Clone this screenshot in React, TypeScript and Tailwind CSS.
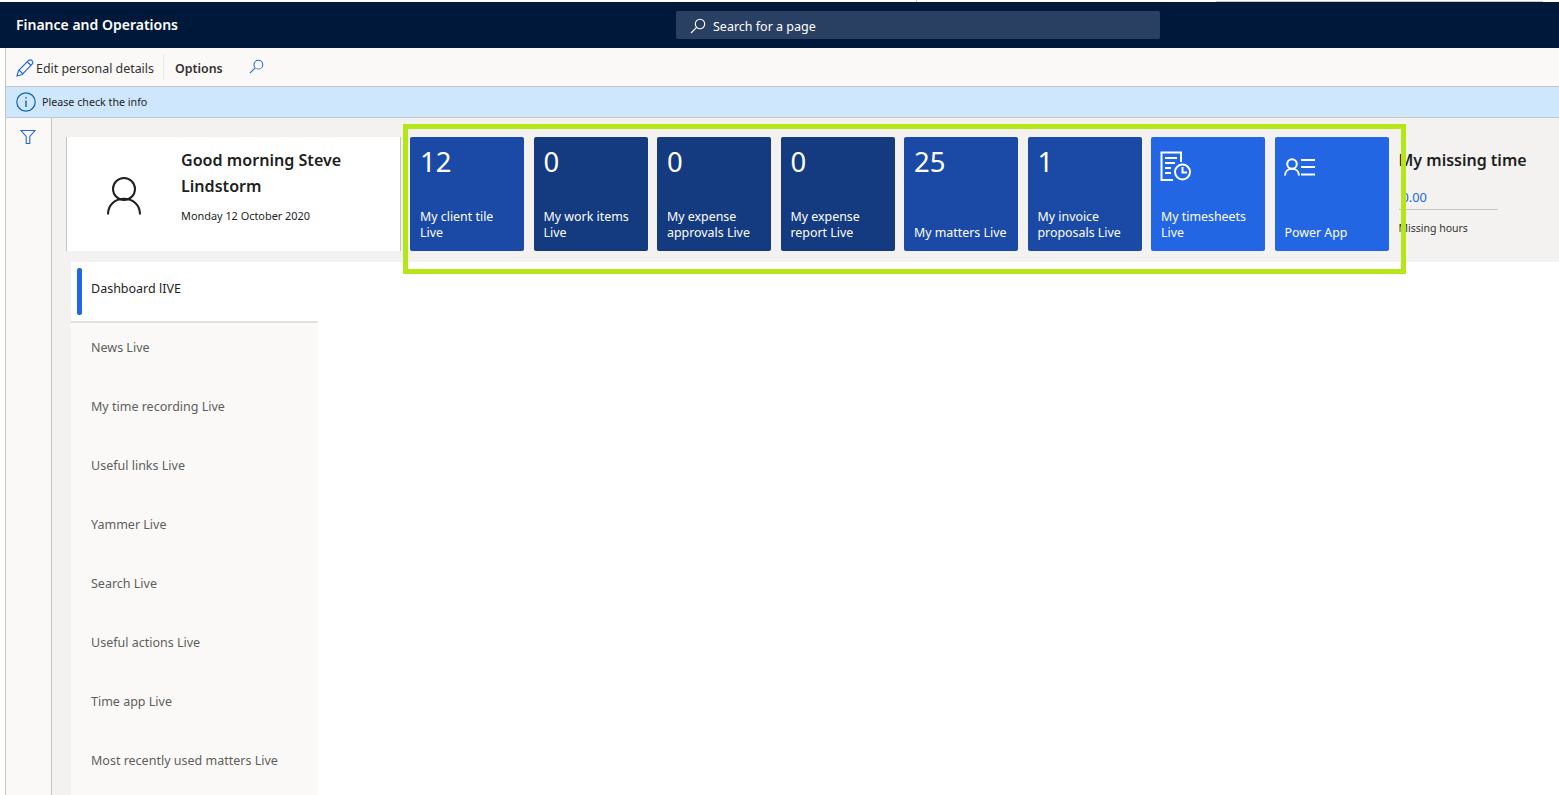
const tiles = [
  { count: "12", lines: ["My client tile", "Live"], color: "bg-[#1a4aa5]" },
  { count: "0", lines: ["My work items", "Live"], color: "bg-[#143a7f]" },
  { count: "0", lines: ["My expense", "approvals Live"], color: "bg-[#143a7f]" },
  { count: "0", lines: ["My expense", "report Live"], color: "bg-[#143a7f]" },
  { count: "25", lines: ["My matters Live"], color: "bg-[#1a4aa5]" },
  { count: "1", lines: ["My invoice", "proposals Live"], color: "bg-[#1a4aa5]" },
  { icon: "timesheet", lines: ["My timesheets", "Live"], color: "bg-[#2266e3]" },
  { icon: "person", lines: ["Power App"], color: "bg-[#2266e3]" },
];

const navItems = [
  "News Live",
  "My time recording Live",
  "Useful links Live",
  "Yammer Live",
  "Search Live",
  "Useful actions Live",
  "Time app Live",
  "Most recently used matters Live",
];

const SearchIcon = ({ className }: { className: string }) => (
  <svg viewBox="0 0 16 16" fill="none" stroke="currentColor" strokeWidth="1.1" className={className}>
    <circle cx="10" cy="6" r="4.7" />
    <path d="M6.6 9.4 1 15" />
  </svg>
);

const TimesheetIcon = () => (
  <svg viewBox="0 0 32 32" fill="none" stroke="white" strokeWidth="2" className="ml-[-1px] mt-[-1px] h-[32px] w-[32px]">
    <path d="M13 29H1.500V1.500H21V11" />
    <path d="M5 7H17M5 12H15M5 17H11M5 22H11" />
    <circle cx="22.500" cy="21" r="7.500" />
    <path d="M22.500 16V21.500H27" />
  </svg>
);

const PersonListIcon = () => (
  <svg viewBox="0 0 32 24" fill="none" stroke="white" strokeWidth="2" className="ml-[-1px] h-[24px] w-[32px]">
    <circle cx="8" cy="8" r="4.800" />
    <path d="M1 19.500C1 15.500 4 12.800 8 12.800C12 12.800 15 15.500 15 19.500" />
    <path d="M17 4H31M17 11H31M17 18.500H31" />
  </svg>
);

export default function App() {
  return (
    <div className="relative flex h-[795px] w-[1559px] flex-col overflow-hidden bg-white font-['Noto_Sans',sans-serif] text-[#201f1e]">
      {/* bit of the window behind, peeking out above the bar */}
      <div className="flex h-[2px]">
        <div className="ml-[916px] h-[2px] w-px bg-[#c8c8c8]" />
        <div className="ml-[299px] mt-px h-px w-[327px] bg-[#c8c8c8]" />
      </div>

      <header className="flex h-[46px] items-center bg-[#00183a]">
        <div className="mb-[2px] ml-4 w-[660px] text-[14px] font-semibold text-white">Finance and Operations</div>
        <div className="flex h-[28px] w-[484px] items-center rounded-[2px] bg-[#2a4063] pl-[14px] text-white">
          <SearchIcon className="mt-[2px] h-[16px] w-[16px]" />
          <span className="ml-[7px] pt-[4px] text-[12.500px]">Search for a page</span>
        </div>
      </header>

      <div className="ml-[5px] flex min-h-0 flex-1 flex-col border-l border-[#c4c4c4]">
        <div className="flex h-[39px] items-center border-b border-[#c8c6c4] bg-[#faf9f8] text-[12.400px]">
          <svg viewBox="0 0 18 18" fill="none" stroke="#2266e3" strokeWidth="1.1" className="ml-[10px] mt-px h-[18px] w-[18px]">
            <path d="M1 17 2.500 11.500 12.500 1.500C13.500 0.700 15 0.700 16 1.700C17 2.700 17 4 16.300 5L6.200 15.500 1 17Z" />
            <path d="M3 11 7 15M11.500 3 15 6.500" />
          </svg>
          <span className="ml-[2px] w-[127px] pt-[4px] text-[#323130]">Edit personal details</span>
          <div className="h-[26px] w-px bg-[#edebe9]" />
          <span className="ml-[11px] pt-[4px] font-semibold text-[#323130]">Options</span>
          <SearchIcon className="mb-[1px] ml-[26px] h-[15px] w-[15px] text-[#2266e3]" />
        </div>

        <div className="flex h-[31px] items-center border-b border-[#c8c6c4] bg-[#cfe7fd] text-[10.700px]">
          <svg viewBox="0 0 20 20" fill="none" stroke="#0f62b0" strokeWidth="1.2" className="ml-[10px] h-[20px] w-[20px]">
            <circle cx="10" cy="10" r="9.200" />
            <path d="M10 8.500V15M10 5V6.500" strokeWidth="1.400" />
          </svg>
          <span className="ml-[6px] text-[#201f1e]">Please check the info</span>
        </div>

        <div className="flex min-h-0 flex-1">
          <div className="w-[46px] shrink-0 border-r border-[#c4c4c4] bg-[#faf9f8] pl-[14px] pt-[11px]">
            <svg viewBox="0 0 16 16" fill="none" stroke="#2266e3" strokeWidth="1.100" className="h-[16px] w-[16px]">
              <path d="M1 1.500H15L9.800 7.500V14.500H6.200V7.500L1 1.500Z" />
            </svg>
          </div>

          <main className="flex min-w-0 flex-1 flex-col">
            <section className="flex h-[144px] items-start bg-[#f3f2f1] pl-[14px] pt-[19px]">
              <div className="flex h-[114px] w-[335px] border-x border-[#c8c6c4] bg-white">
                <div className="flex w-[114px] shrink-0 justify-center pt-[39px]">
                  <svg viewBox="0 0 36 40" fill="none" stroke="#201f1e" strokeWidth="2" className="h-[40px] w-[36px]">
                    <circle cx="18" cy="13" r="11" />
                    <path d="M2 38.500C2 29 9 22.800 18 22.800C27 22.800 34 29 34 38.500" />
                  </svg>
                </div>
                <div className="pt-[10px]">
                  <div className="text-[16.100px] font-semibold leading-[26px]">
                    Good morning Steve
                    <br />
                    Lindstorm
                  </div>
                  <div className="mt-[9px] text-[10.900px] leading-[15px]">Monday 12 October 2020</div>
                </div>
              </div>

              <div className="ml-[9px] flex gap-[9.500px]">
                {tiles.map((tile) => (
                  <div key={tile.lines[0]} className={`flex h-[114px] w-[114px] flex-col rounded-[2px] px-[10px] pb-[10px] text-white ${tile.color}`}>
                    <div className="h-[34px] pt-[6px] text-[27.500px] leading-[38px]">
                      {tile.count}
                      {tile.icon === "timesheet" && <div className="pt-[9px]"><TimesheetIcon /></div>}
                      {tile.icon === "person" && <div className="pt-[13px]"><PersonListIcon /></div>}
                    </div>
                    <div className="mt-auto text-[12.400px] leading-[16px]">
                      {tile.lines.map((line) => (
                        <div key={line}>{line}</div>
                      ))}
                    </div>
                  </div>
                ))}
              </div>

              <div className="ml-[10px] w-[99px] pt-[10px]">
                <div className="whitespace-nowrap text-[16px] font-semibold leading-[26px]">My missing time</div>
                <div className="mt-[15px] border-b border-[#c8c6c4] pb-[3px] pl-[3px] text-[12.800px] leading-[18px] text-[#2266e3]">0.00</div>
                <div className="mt-[9px] whitespace-nowrap text-[10.500px] leading-[18px] text-[#323130]">Missing hours</div>
              </div>
            </section>

            <div className="flex min-h-0 flex-1">
              <div className="w-[19px] shrink-0 bg-[#f3f2f1]" />
              <nav className="w-[247px] bg-[#faf9f8] text-[12.500px]">
                <div className="flex h-[61px] items-start border-b-2 border-[#e4e2e0] bg-white pl-[6px] pt-[6px]">
                  <div className="h-[47px] w-[5px] rounded-[2px] bg-[#2266e3]" />
                  <span className="ml-[9px] mt-[12px] text-[#201f1e]">Dashboard lIVE</span>
                </div>
                {navItems.map((item) => (
                  <div key={item} className="flex h-[59px] items-center pb-[9px] pl-[20px] text-[#605e5c]">
                    {item}
                  </div>
                ))}
              </nav>
            </div>
          </main>
        </div>
      </div>

      {/* highlight box drawn over the screenshot */}
      <div className="pointer-events-none absolute left-[403px] top-[124px] h-[150px] w-[1003px] border-[5px] border-[#b5e618]" />
    </div>
  );
}
